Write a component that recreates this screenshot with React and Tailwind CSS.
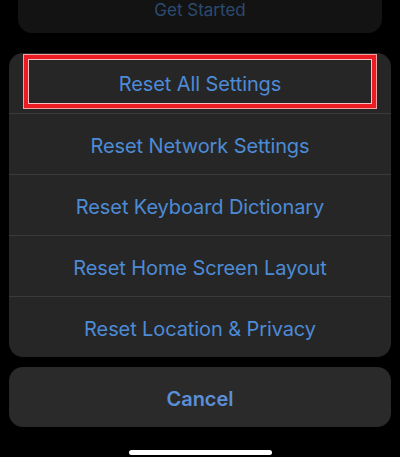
export default function App() {
  const rows = [
    "Reset Network Settings",
    "Reset Keyboard Dictionary",
    "Reset Home Screen Layout",
    "Reset Location & Privacy",
  ];
  const font = { fontFamily: 'Inter, "Liberation Sans", Arial, sans-serif' };
  return (
    <div className="w-[400px] h-[457px] bg-black flex flex-col overflow-hidden" style={font}>
      <div className="mx-[18px] h-[33px] rounded-b-[14px] bg-[#131313] flex justify-center">
        <span className="text-[17px] leading-[20px] text-[#2b4b70]">Get Started</span>
      </div>
      <div className="mt-[20px] mx-[9px] rounded-[14px] bg-[#262626] flex flex-col">
        <div className="h-[60px] px-[15px] pt-[2px] pb-[5px] flex">
          <div className="flex-1 flex items-center justify-center pt-[5px] border-[4px] border-[#ec1c24] shadow-[0_0_0_1px_#f2a0a0,inset_0_0_0_1px_#f4c0c0]">
            <span className="text-[20px] leading-[24px] text-[#4d8bd6] tracking-[-0.1px]">Reset All Settings</span>
          </div>
        </div>
        {rows.map((r) => (
          <div key={r} className="flex flex-col">
            <div className="h-px bg-[#3a3a3a]" />
            <div className="h-[60px] pt-[3px] flex items-center justify-center">
              <span className="text-[20px] leading-[24px] text-[#4d8bd6] tracking-[-0.1px]">{r}</span>
            </div>
          </div>
        ))}
      </div>
      <div className="mt-[10px] mx-[9px] h-[60px] pt-[3px] rounded-[14px] bg-[#2a2a2a] flex items-center justify-center">
        <span className="text-[20px] leading-[24px] font-semibold text-[#5a8fd8]">Cancel</span>
      </div>
      <div className="mt-[23px] flex justify-center">
        <div className="w-[143px] h-[5px] rounded-full bg-white" />
      </div>
    </div>
  );
}
